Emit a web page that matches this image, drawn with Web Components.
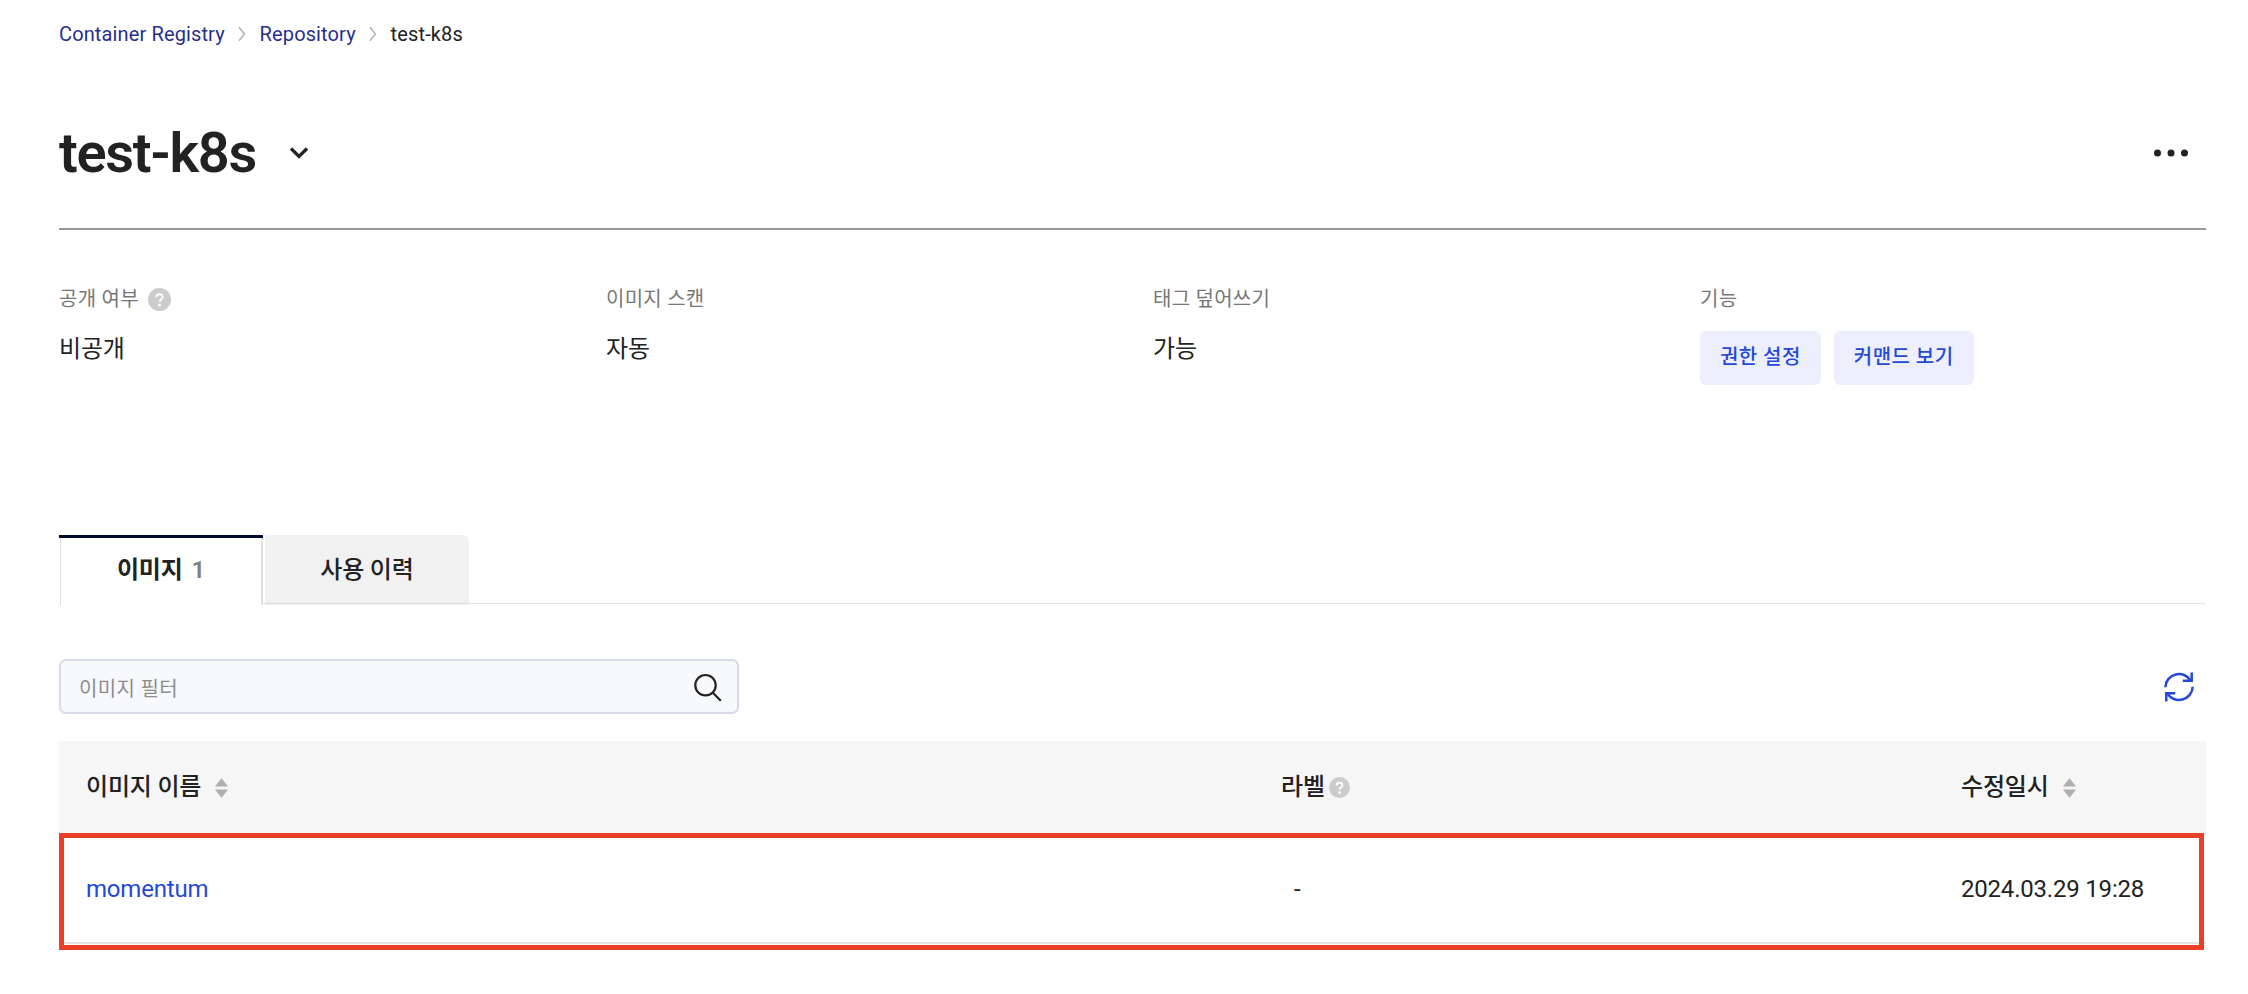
<!DOCTYPE html>
<html lang="ko">
<head>
<meta charset="utf-8">
<title>test-k8s</title>
<style>
  body {
    margin: 0;
    background: #fff;
    color: #222;
    font-family: Roboto, "Noto Sans CJK KR", sans-serif;
    font-size: 24px;
    line-height: 36px;
    letter-spacing: -0.2px;
  }
</style>
</head>
<body>
<registry-page></registry-page>

<script>
class BreadCrumb extends HTMLElement {
  constructor() {
    super();
    this.attachShadow({ mode: 'open' });
  }

  connectedCallback() {
    const items = this.getAttribute('items').split('|');
    const arrow = `<svg width="8" height="16" viewBox="0 0 8 16" fill="none" stroke="#b5b5b5" stroke-width="1.6"><path d="M1 1.2 6.4 8 1 14.8"/></svg>`;
    this.shadowRoot.innerHTML = `
      <style>
        :host {
          display: flex;
          align-items: center;
          height: 30px;
          gap: 13.4px;
          font-size: 20px;
          line-height: 30px;
          letter-spacing: 0.13px;
        }
        a { color: #27308f; }
      </style>
      ${items.map((item, i) => (i < items.length - 1 ? `<a>${item}</a>${arrow}` : `<span>${item}</span>`)).join('')}`;
  }
}
customElements.define('bread-crumb', BreadCrumb);

class HelpIcon extends HTMLElement {
  constructor() {
    super();
    this.attachShadow({ mode: 'open' }).innerHTML = `
      <style>
        :host { display: block; width: 21px; height: 21px; }
        svg { display: block; width: 100%; height: 100%; }
      </style>
      <svg viewBox="0 0 22 22" fill="none">
        <circle cx="11" cy="11" r="11" fill="#ccc"/>
        <path d="M8 8.9C8 7 9.2 5.9 11 5.9s3 1.1 3 2.7c0 2.1-2.9 2.2-2.9 4.6" stroke="#fff" stroke-width="1.9"/>
        <circle cx="11" cy="16.3" r="1.4" fill="#fff"/>
      </svg>`;
  }
}
customElements.define('help-icon', HelpIcon);

class SortIcon extends HTMLElement {
  constructor() {
    super();
    this.attachShadow({ mode: 'open' }).innerHTML = `
      <style>
        :host { display: block; width: 13px; height: 20px; }
        svg { display: block; }
      </style>
      <svg width="13" height="20" viewBox="0 0 13 20" fill="#b0b0b0">
        <path d="M6.5 0 13 8.4H0zM6.5 20 0 11.4h13z"/>
      </svg>`;
  }
}
customElements.define('sort-icon', SortIcon);

class PageTitle extends HTMLElement {
  constructor() {
    super();
    this.attachShadow({ mode: 'open' }).innerHTML = `
      <style>
        :host {
          display: flex;
          align-items: center;
          height: 150px;
          box-sizing: border-box;
          border-bottom: 2px solid #999;
          padding: 0 18px 2px 0;
        }
        h1 {
          width: 198px;
          margin: 0;
          font-size: 56px;
          font-weight: 600;
          line-height: 72px;
          letter-spacing: -1.3px;
          white-space: nowrap;
        }
        .chevron { margin-left: 32px; }
        .more { margin-left: auto; }
      </style>
      <h1><slot></slot></h1>
      <svg class="chevron" width="20" height="14" viewBox="0 0 20 14" fill="none" stroke="#222" stroke-width="3.2"><path d="m2 2.5 8 8 8-8"/></svg>
      <svg class="more" width="34" height="8" viewBox="0 0 34 8" fill="#222"><circle cx="3.5" cy="4" r="3.5"/><circle cx="17" cy="4" r="3.5"/><circle cx="30.5" cy="4" r="3.5"/></svg>`;
  }
}
customElements.define('page-title', PageTitle);

class InfoItem extends HTMLElement {
  constructor() {
    super();
    this.attachShadow({ mode: 'open' });
  }

  connectedCallback() {
    this.shadowRoot.innerHTML = `
      <style>
        :host { display: block; }
        .label {
          display: flex;
          align-items: center;
          gap: 9px;
          height: 30px;
          font-size: 20px;
          line-height: 30px;
          letter-spacing: 0.25px;
          color: #777;
        }
        help-icon { width: 23px; height: 23px; }
        .value {
          display: flex;
          gap: 13px;
          margin-top: 17px;
        }
      </style>
      <div class="label"><span>${this.getAttribute('label')}</span>${this.hasAttribute('help') ? '<help-icon></help-icon>' : ''}</div>
      <div class="value"><slot></slot></div>`;
  }
}
customElements.define('info-item', InfoItem);

class SoftButton extends HTMLElement {
  constructor() {
    super();
    this.attachShadow({ mode: 'open' }).innerHTML = `
      <style>
        :host { display: block; }
        button {
          display: block;
          height: 54px;
          padding: 0 20px 2px;
          border: 0;
          border-radius: 6px;
          background: #edf0fc;
          color: #2449d8;
          font: 500 20px/30px Roboto, "Noto Sans CJK KR", sans-serif;
          letter-spacing: 0.45px;
        }
      </style>
      <button><slot></slot></button>`;
  }
}
customElements.define('soft-button', SoftButton);

class TabBar extends HTMLElement {
  constructor() {
    super();
    this.attachShadow({ mode: 'open' }).innerHTML = `
      <style>
        :host {
          display: flex;
          gap: 2px;
          height: 70px;
          background: linear-gradient(#e3e3e3, #e3e3e3) 0 68px / 100% 1px no-repeat;
        }
        div {
          display: flex;
          align-items: center;
          justify-content: center;
          gap: 9px;
          width: 204px;
          box-sizing: border-box;
          font-weight: 500;
        }
        .active {
          border-top: 3px solid #000a2b;
          background:
            linear-gradient(#e0e0e0, #e0e0e0) 1px 0 / 1px 100% no-repeat padding-box,
            linear-gradient(#e0e0e0, #e0e0e0) 100% 0 / 2px 100% no-repeat padding-box,
            #fff;
          padding-bottom: 3px;
          font-weight: 600;
        }
        .idle {
          border-radius: 0 7px 0 0;
          background: linear-gradient(#dedede, #dedede) 0 68px / 100% 1px no-repeat, #f1f1f1;
        }
        .count { color: #808080; }
      </style>
      <div class="active"><span>이미지</span><span class="count">1</span></div>
      <div class="idle">사용 이력</div>`;
  }
}
customElements.define('tab-bar', TabBar);

class FilterBar extends HTMLElement {
  constructor() {
    super();
    this.attachShadow({ mode: 'open' }).innerHTML = `
      <style>
        :host {
          display: flex;
          align-items: center;
          justify-content: space-between;
          height: 55px;
          padding-right: 11px;
        }
        .field {
          display: flex;
          align-items: center;
          justify-content: space-between;
          width: 680px;
          height: 55px;
          box-sizing: border-box;
          padding: 0 15px 0 18px;
          border: 2px solid #d7dbe7;
          border-radius: 7px;
          background: #f8f9fc;
        }
        .placeholder {
          padding-top: 4px;
          color: #8c8c8c;
          font-size: 20px;
          line-height: 30px;
          letter-spacing: 0.35px;
        }
      </style>
      <div class="field">
        <span class="placeholder">이미지 필터</span>
        <svg width="30" height="30" viewBox="0 0 30 30" fill="none" stroke="#222" stroke-width="2.2"><circle cx="13.5" cy="13.2" r="10.2"/><path d="m20.6 20.4 8.2 8.3"/></svg>
      </div>
      <svg width="32" height="32" viewBox="0 0 32 32" fill="none" stroke="#2449d8" stroke-width="2.5">
        <path d="M2.3 16.2A13.7 13.7 0 0 1 27.7 9.6M29.7 15.8A13.7 13.7 0 0 1 4.3 22.4"/>
        <path d="M28.7 1.5v8.2h-8.9M3.3 30.5v-8.2h8.9"/>
      </svg>`;
  }
}
customElements.define('filter-bar', FilterBar);

class ImageTable extends HTMLElement {
  constructor() {
    super();
    this.attachShadow({ mode: 'open' }).innerHTML = `
      <style>
        :host { display: block; }
        .row {
          display: grid;
          grid-template-columns: 1195px 680px 1fr;
          align-items: center;
          padding-left: 27px;
          box-sizing: border-box;
          border-bottom: 2px solid #e3e3e3;
        }
        .head {
          height: 95px;
          padding-bottom: 2px;
          background: #f6f6f6;
          font-weight: 500;
        }
        .head > div {
          display: flex;
          align-items: center;
        }
        .body { position: relative; height: 108px; }
        .body::after {
          content: "";
          position: absolute;
          inset: -3px 2px -8px 0;
          border: 5px solid #e94027;
        }
        sort-icon { margin: 2px 0 0 14px; }
        help-icon { margin: 2px 0 0 4px; }
        a { color: #2449d8; }
        .label { padding-left: 13px; }
      </style>
      <div class="row head">
        <div>이미지 이름<sort-icon></sort-icon></div>
        <div>라벨<help-icon></help-icon></div>
        <div>수정일시<sort-icon></sort-icon></div>
      </div>
      <div class="row body">
        <a>momentum</a>
        <span class="label">-</span>
        <span>2024.03.29 19:28</span>
      </div>`;
  }
}
customElements.define('image-table', ImageTable);

class RegistryPage extends HTMLElement {
  constructor() {
    super();
    this.attachShadow({ mode: 'open' }).innerHTML = `
      <style>
        :host {
          display: block;
          box-sizing: border-box;
          height: 994px;
          padding: 19px 42px 0 59px;
        }
        page-title { margin-top: 31px; }
        .info {
          display: grid;
          grid-template-columns: repeat(3, 547px) 1fr;
          height: 251px;
          margin-top: 54px;
        }
        filter-bar { margin-top: 54px; }
        image-table { margin-top: 27px; }
      </style>
      <bread-crumb items="Container Registry|Repository|test-k8s"></bread-crumb>
      <page-title>test-k8s</page-title>
      <section class="info">
        <info-item label="공개 여부" help>비공개</info-item>
        <info-item label="이미지 스캔">자동</info-item>
        <info-item label="태그 덮어쓰기">가능</info-item>
        <info-item label="기능"><soft-button>권한 설정</soft-button><soft-button>커맨드 보기</soft-button></info-item>
      </section>
      <tab-bar></tab-bar>
      <filter-bar></filter-bar>
      <image-table></image-table>`;
  }
}
customElements.define('registry-page', RegistryPage);
</script>
</body>
</html>
